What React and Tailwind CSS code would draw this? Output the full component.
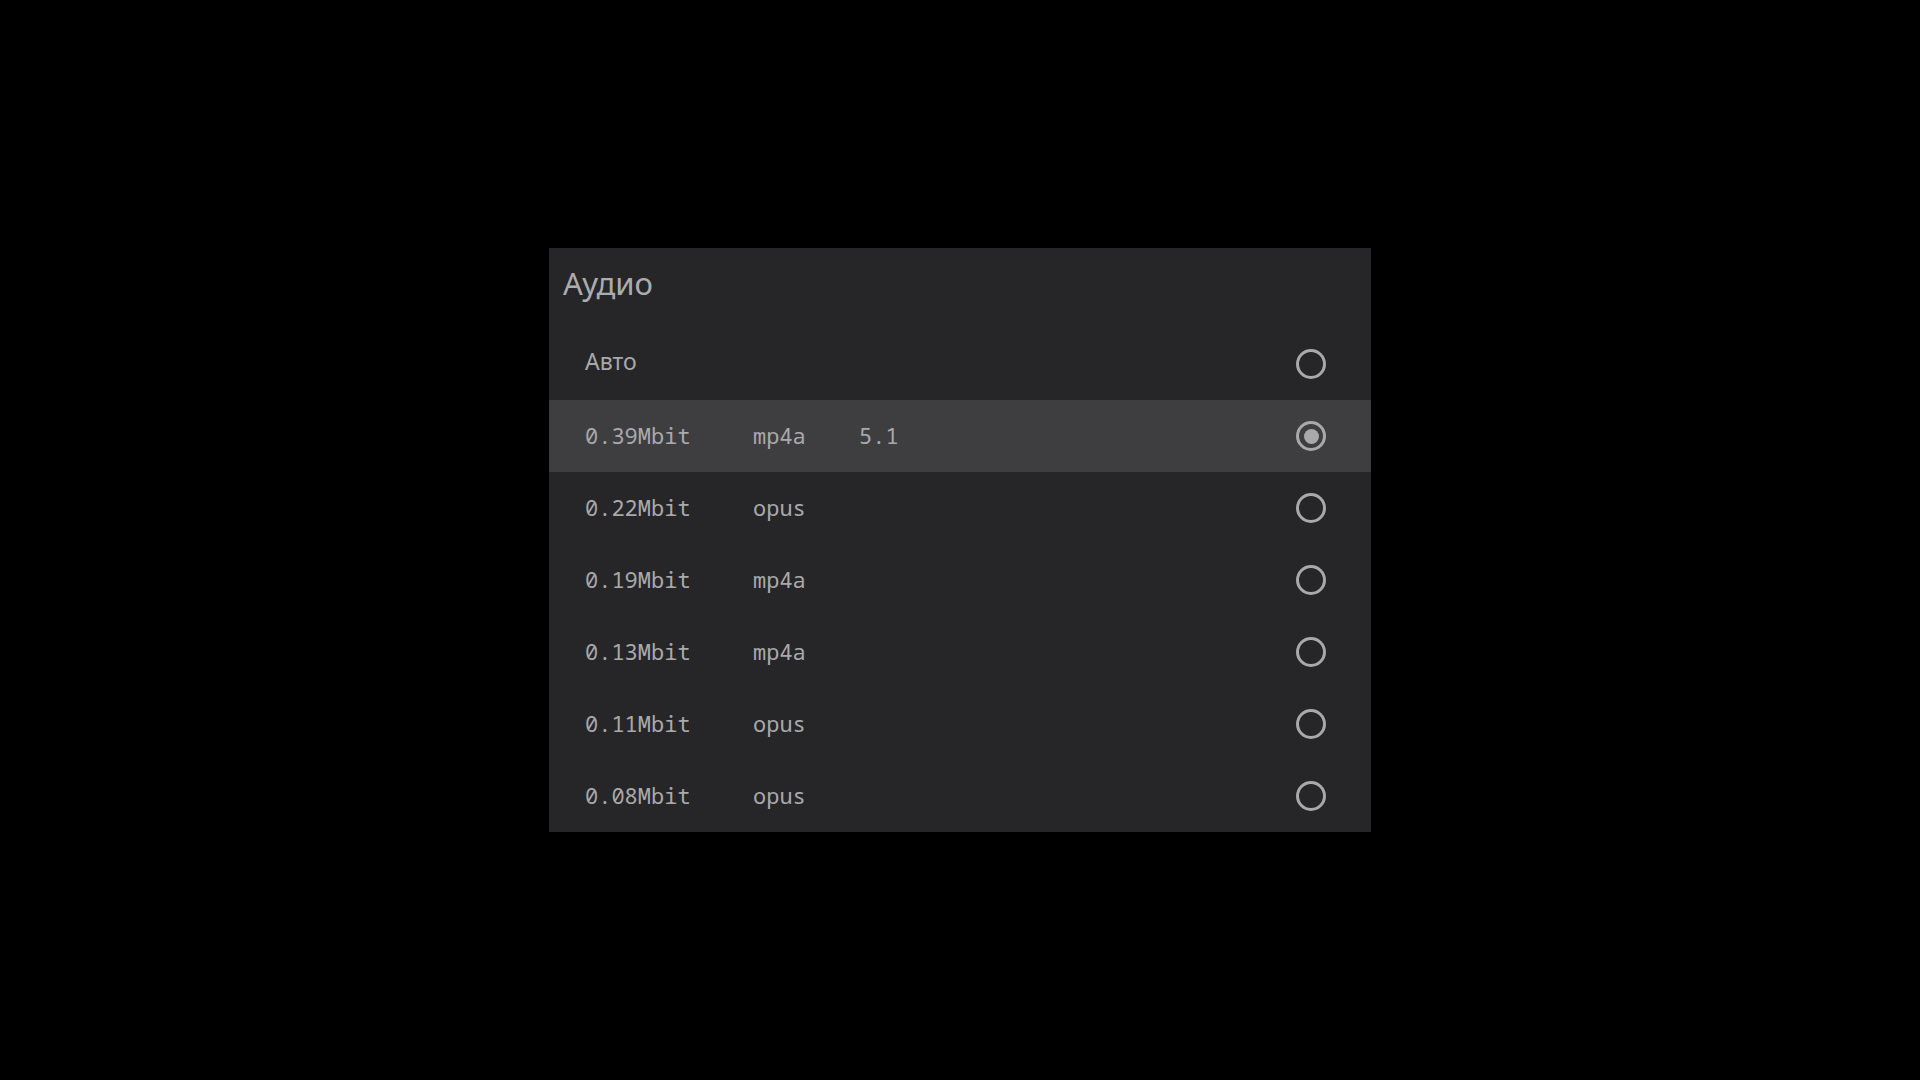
import { useState } from "react";

const tracks = [
  { rate: "0.39Mbit", codec: "mp4a", ch: "5.1" },
  { rate: "0.22Mbit", codec: "opus", ch: "" },
  { rate: "0.19Mbit", codec: "mp4a", ch: "" },
  { rate: "0.13Mbit", codec: "mp4a", ch: "" },
  { rate: "0.11Mbit", codec: "opus", ch: "" },
  { rate: "0.08Mbit", codec: "opus", ch: "" },
];

// Radio ring, filled dot when checked
function Radio({ checked }) {
  return (
    <div className="w-[30px] h-[30px] rounded-full border-[3px] border-[#a9a9ac] flex items-center justify-center">
      {checked && <div className="w-[15px] h-[15px] rounded-full bg-[#a9a9ac]" />}
    </div>
  );
}

export default function App() {
  const [selected, setSelected] = useState(0);

  return (
    <div className="w-full h-screen bg-black flex items-center justify-center font-['Noto_Sans',sans-serif]">
      <div className="w-[822px] bg-[#262628] flex flex-col">
        {/* Title */}
        <div className="h-[80px] pl-[14px] pt-[15px]">
          <h1 className="text-[31px] leading-[40px] text-[#acacaf]">Аудио</h1>
        </div>

        {/* Auto row */}
        <div
          className={`h-[72px] flex items-center pl-[36px] pr-[45px] cursor-pointer ${
            selected === -1 ? "bg-[#3e3e41]" : ""
          }`}
          onClick={() => setSelected(-1)}
        >
          <span className="flex-1 mb-[5px] text-[23px] text-[#a9a9ac]">Авто</span>
          <Radio checked={selected === -1} />
        </div>

        {/* Track rows */}
        {tracks.map((t, i) => (
          <div
            key={i}
            className={`h-[72px] flex items-center pl-[36px] pr-[45px] cursor-pointer ${
              selected === i ? "bg-[#3e3e41]" : ""
            }`}
            onClick={() => setSelected(i)}
          >
            <div className="flex-1 mb-[2px] flex items-baseline text-[22px] text-[#a9a9ac] font-['Noto_Sans_Mono','DejaVu_Sans_Mono',monospace]">
              <span className="w-[168px]">{t.rate}</span>
              <span className="w-[106px]">{t.codec}</span>
              <span>{t.ch}</span>
            </div>
            <Radio checked={selected === i} />
          </div>
        ))}
      </div>
    </div>
  );
}
